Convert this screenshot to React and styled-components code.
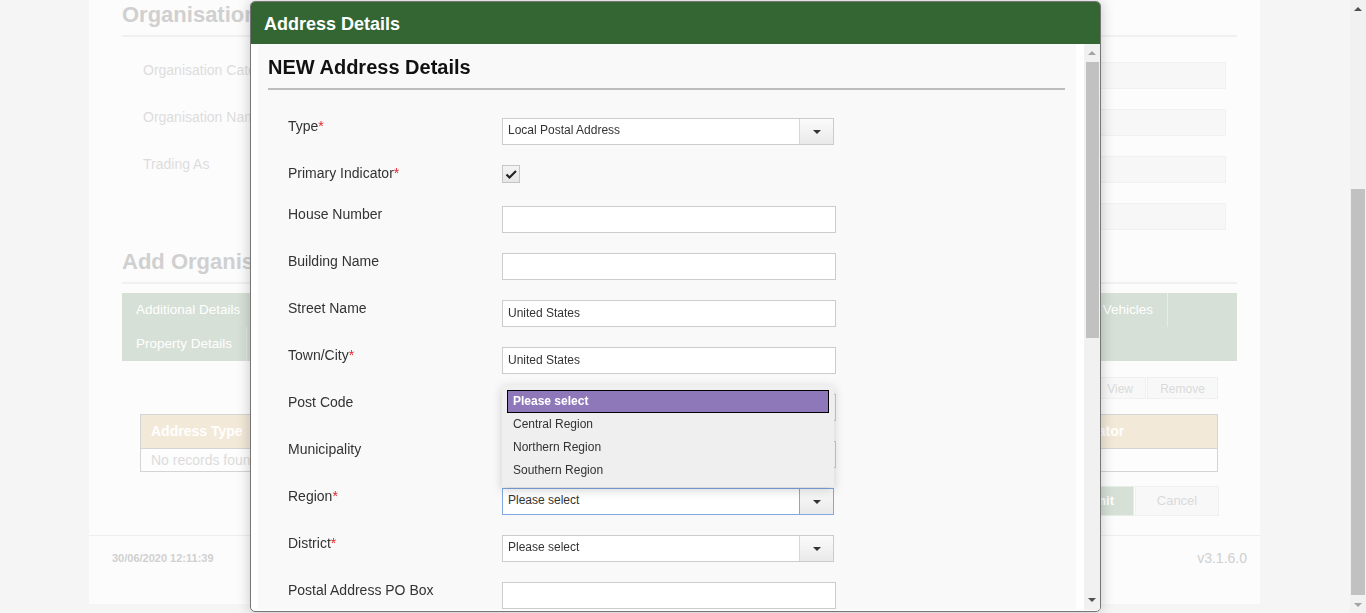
import React from 'react'
import styled, { createGlobalStyle } from 'styled-components'

const GlobalStyle = createGlobalStyle`
  html, body {
    margin: 0;
    padding: 0;
    overflow: hidden;
  }
  body {
    font-family: "Liberation Sans", Arial, sans-serif;
  }
`

const Screen = styled.div`
  display: flex;
  width: 1366px;
  height: 613px;
  background: #f5f5f5;
`

const Page = styled.div`
  flex: 1;
  height: 613px;
`

const Panel = styled.div`
  margin-left: 89px;
  width: 1171px;
  height: 604px;
  background: #fcfcfc;
  display: flex;
  flex-direction: column;
`

const Content = styled.div`
  padding: 0 23px 0 33px;
  flex: 1;
`

const SectionTitle = styled.div`
  margin-top: ${props => props.$top || 0}px;
  font-size: 22px;
  line-height: 24px;
  font-weight: bold;
  color: #d0d0d0;
  padding-bottom: 8px;
  border-bottom: 2px solid #f0f0f0;
  white-space: nowrap;
`

const FieldList = styled.div`
  margin-top: 25px;
  padding-left: 21px;
`

const FieldRow = styled.div`
  display: flex;
  height: 27px;
  margin-bottom: 20px;
`

const FieldLabel = styled.div`
  width: 360px;
  font-size: 14px;
  line-height: 16px;
  color: #dcdcdc;
`

const FieldInput = styled.div`
  flex: 1;
  margin-right: 11px;
  background: #f7f7f7;
  border: 1px solid #f1f1f1;
`

const TabBar = styled.div`
  margin-top: 9px;
  background: #d6e0d6;
`

const TabRow = styled.div`
  display: flex;
  padding-right: ${props => props.$padRight || 0}px;
`

const Tab = styled.div`
  flex: ${props => (props.$grow ? 1 : 'none')};
  width: ${props => (props.$width ? `${props.$width}px` : 'auto')};
  height: 34px;
  line-height: 34px;
  padding: 0 14px 0 14px;
  font-size: 13.5px;
  color: #fff;
  border-right: 1px solid #e7ece7;
  white-space: nowrap;
`

const ActionBar = styled.div`
  display: flex;
  justify-content: flex-end;
  gap: 1px;
  margin: 16px 19px 0 0;
`

const GhostButton = styled.div`
  height: 22px;
  line-height: 22px;
  padding: 0 ${props => props.$pad || 12}px;
  font-size: ${props => props.$size || 12}px;
  color: ${props => (props.$primary ? '#fff' : '#dadada')};
  font-weight: ${props => (props.$primary ? 'bold' : 'normal')};
  background: ${props => (props.$primary ? '#d6e0d6' : '#f8f8f8')};
  border: 1px solid ${props => (props.$primary ? '#e3f0e3' : '#f0f0f0')};
  text-align: center;
  min-width: ${props => props.$width || 0}px;
  box-sizing: border-box;
`

const Table = styled.div`
  margin: 15px 19px 0 18px;
  border: 1px solid #d4d4d4;
`

const TableHead = styled.div`
  display: grid;
  grid-template-columns: 1fr 1fr 1fr 218px;
  background: #f3e9d9;
  border-bottom: 1px solid #d4d4d4;
`

const HeadCell = styled.div`
  height: 33px;
  line-height: 33px;
  padding: 0 10px;
  font-size: 14px;
  font-weight: bold;
  color: #fff;
  white-space: nowrap;
`

const EmptyRow = styled.div`
  height: 22px;
  line-height: 22px;
  padding: 0 10px;
  font-size: 14px;
  color: #dcdcdc;
  background: #fdfdfd;
`

const FormButtons = styled.div`
  display: flex;
  justify-content: flex-end;
  gap: 1px;
  margin: 14px 18px 0 0;
  & > div {
    height: 30px;
    line-height: 28px;
  }
`

const Footer = styled.div`
  border-top: 1px solid #eeeeee;
  height: 69px;
  padding: 14px 13px 0 23px;
  box-sizing: border-box;
  display: flex;
  justify-content: space-between;
  align-items: flex-start;
`

const Stamp = styled.div`
  font-size: 11px;
  line-height: 16px;
  font-weight: bold;
  color: #d0d0d0;
`

const Version = styled.div`
  font-size: 14px;
  line-height: 16px;
  color: #cfcfcf;
`

const ScrollTrack = styled.div`
  width: 16px;
  height: ${props => props.$height}px;
  flex: none;
  background: #f1f1f1;
  display: flex;
  flex-direction: column;
  align-items: center;
`

const ArrowCell = styled.div`
  height: ${props => props.$h || 17}px;
  width: 16px;
  display: flex;
  align-items: center;
  justify-content: center;
  &::after {
    content: '';
    border-left: 4px solid transparent;
    border-right: 4px solid transparent;
    ${props => (props.$down ? 'border-top' : 'border-bottom')}: 4px solid ${props => props.$color};
  }
`

const Thumb = styled.div`
  width: ${props => props.$w || 13}px;
  height: ${props => props.$h}px;
  margin-top: ${props => props.$top}px;
  background: #c1c1c1;
`

const Spacer = styled.div`
  flex: 1;
`

/* modal */

const Modal = styled.div`
  position: fixed;
  left: 250px;
  top: 1px;
  width: 851px;
  height: 611px;
  box-sizing: border-box;
  border: 1px solid #767676;
  border-radius: 5px;
  background: #fff;
  box-shadow: 0 0 14px rgba(0, 0, 0, 0.22);
  display: flex;
  flex-direction: column;
  overflow: hidden;
`

const ModalHeader = styled.div`
  height: 42px;
  flex: none;
  background: #336633;
  display: flex;
  align-items: center;
  padding: 2px 0 0 13px;
  box-sizing: border-box;
  font-size: 18px;
  font-weight: bold;
  color: #fff;
`

const ModalBody = styled.div`
  flex: 1;
  display: flex;
  padding-left: 7px;
  gap: 8px;
  min-height: 0;
`

const ScrollArea = styled.div`
  flex: 1;
  background: #f9f9f9;
  padding: 11px 11px 0 10px;
  margin-bottom: 2px;
  overflow: hidden;
`

const FormTitle = styled.div`
  font-size: 20px;
  line-height: 24px;
  font-weight: bold;
  color: #111;
  padding-bottom: 9px;
  border-bottom: 2px solid #bdbdbd;
`

const FormRows = styled.div`
  margin-top: 28px;
  padding-left: 20px;
`

const FormRow = styled.div`
  display: flex;
  align-items: flex-start;
  margin-bottom: 20px;
`

const Label = styled.div`
  width: 214px;
  flex: none;
  font-size: 14px;
  line-height: 16px;
  color: #333;
`

const Req = styled.span`
  color: #e4262a;
`

const Control = styled.div`
  position: relative;
`

const TextInput = styled.div`
  width: 334px;
  height: 27px;
  box-sizing: border-box;
  border: 1px solid #cccccc;
  background: #fff;
  padding: 0 5px;
  font-size: 12px;
  line-height: 25px;
  color: #333;
`

const SelectBox = styled.div`
  width: 332px;
  height: 27px;
  box-sizing: border-box;
  border: 1px solid ${props => (props.$focused ? '#82a8e4' : '#cccccc')};
  background: #fff;
  display: flex;
`

const SelectValue = styled.div`
  flex: 1;
  padding: 0 5px;
  font-size: 12px;
  line-height: 23px;
  color: #333;
`

const SelectButton = styled.div`
  width: 33px;
  border-left: 1px solid ${props => (props.$focused ? '#82a8e4' : '#d6d6d6')};
  background: linear-gradient(#fbfbfb, #e9e9e9);
  display: flex;
  align-items: center;
  justify-content: center;
  &::after {
    content: '';
    border-left: 4px solid transparent;
    border-right: 4px solid transparent;
    border-top: 4px solid #333;
  }
`

const CheckWrap = styled.div`
  height: 21px;
`

const CheckBox = styled.div`
  width: 18px;
  height: 18px;
  box-sizing: border-box;
  border: 1px solid #c4c4c4;
  background: linear-gradient(#f4f4f4, #e6e6e6);
  display: flex;
  align-items: center;
  justify-content: center;
`

const DropList = styled.div`
  position: absolute;
  left: 0;
  bottom: calc(100% + 1px);
  width: 332px;
  box-sizing: border-box;
  padding: 5px;
  background: #efefef;
  box-shadow: 0 3px 10px rgba(0, 0, 0, 0.18);
  z-index: 5;
`

const DropItem = styled.div`
  height: 23px;
  box-sizing: border-box;
  padding-left: ${props => (props.$active ? 5 : 6)}px;
  font-size: 12px;
  line-height: ${props => (props.$active ? 21 : 23)}px;
  color: ${props => (props.$active ? '#fff' : '#333')};
  font-weight: ${props => (props.$active ? 'bold' : 'normal')};
  background: ${props => (props.$active ? '#8e78b9' : 'transparent')};
  border: ${props => (props.$active ? '1px solid #000' : 'none')};
`

const Select = ({ value, focused }) => (
  <SelectBox $focused={focused}>
    <SelectValue>{value}</SelectValue>
    <SelectButton $focused={focused} />
  </SelectBox>
)

const regions = ['Please select', 'Central Region', 'Northern Region', 'Southern Region']

const LabelText = ({ text, required }) => (
  <Label>
    {text}
    {required && <Req>*</Req>}
  </Label>
)

const App = () => {
  return (
    <>
      <GlobalStyle />
      <Screen>
        <Page>
          <Panel>
            <Content>
              <SectionTitle $top={3}>Organisation</SectionTitle>
              <FieldList>
                <FieldRow>
                  <FieldLabel>Organisation Category</FieldLabel>
                  <FieldInput />
                </FieldRow>
                <FieldRow>
                  <FieldLabel>Organisation Name</FieldLabel>
                  <FieldInput />
                </FieldRow>
                <FieldRow>
                  <FieldLabel>Trading As</FieldLabel>
                  <FieldInput />
                </FieldRow>
                <FieldRow>
                  <FieldLabel />
                  <FieldInput />
                </FieldRow>
              </FieldList>
              <SectionTitle>Add Organisation</SectionTitle>
              <TabBar>
                <TabRow $padRight={69}>
                  <Tab>Additional Details</Tab>
                  <Tab $grow />
                  <Tab>Vehicles</Tab>
                </TabRow>
                <TabRow>
                  <Tab>Property Details</Tab>
                  <Tab $width={60} />
                </TabRow>
              </TabBar>
              <ActionBar>
                <GhostButton $width={46} />
                <GhostButton $width={46}>View</GhostButton>
                <GhostButton $width={71}>Remove</GhostButton>
              </ActionBar>
              <Table>
                <TableHead>
                  <HeadCell>Address Type</HeadCell>
                  <HeadCell />
                  <HeadCell />
                  <HeadCell>Primary Indicator</HeadCell>
                </TableHead>
                <EmptyRow>No records found</EmptyRow>
              </Table>
              <FormButtons>
                <GhostButton $primary $size={13} $width={84}>Submit</GhostButton>
                <GhostButton $size={13} $width={84}>Cancel</GhostButton>
              </FormButtons>
            </Content>
            <Footer>
              <Stamp>30/06/2020 12:11:39</Stamp>
              <Version>v3.1.6.0</Version>
            </Footer>
          </Panel>
        </Page>
        <ScrollTrack $height={613}>
          <ArrowCell $color="#505050" />
          <Thumb $top={172} $h={406} $w={14} />
          <Spacer />
          <ArrowCell $down $color="#a3a3a3" />
        </ScrollTrack>
      </Screen>

      <Modal>
        <ModalHeader>Address Details</ModalHeader>
        <ModalBody>
          <ScrollArea>
            <FormTitle>NEW Address Details</FormTitle>
            <FormRows>
              <FormRow>
                <LabelText text="Type" required />
                <Select value="Local Postal Address" />
              </FormRow>
              <FormRow>
                <LabelText text="Primary Indicator" required />
                <CheckWrap>
                  <CheckBox>
                    <svg width="14" height="14" viewBox="0 0 14 14">
                      <path d="M2.5 7.5 L5.5 10.5 L12 4" fill="none" stroke="#222" strokeWidth="2.2" />
                    </svg>
                  </CheckBox>
                </CheckWrap>
              </FormRow>
              <FormRow>
                <LabelText text="House Number" />
                <TextInput />
              </FormRow>
              <FormRow>
                <LabelText text="Building Name" />
                <TextInput />
              </FormRow>
              <FormRow>
                <LabelText text="Street Name" />
                <TextInput>United States</TextInput>
              </FormRow>
              <FormRow>
                <LabelText text="Town/City" required />
                <TextInput>United States</TextInput>
              </FormRow>
              <FormRow>
                <LabelText text="Post Code" />
                <TextInput />
              </FormRow>
              <FormRow>
                <LabelText text="Municipality" />
                <TextInput />
              </FormRow>
              <FormRow>
                <LabelText text="Region" required />
                <Control>
                  <Select value="Please select" focused />
                  <DropList>
                    {regions.map((r, i) => (
                      <DropItem key={r} $active={i === 0}>{r}</DropItem>
                    ))}
                  </DropList>
                </Control>
              </FormRow>
              <FormRow>
                <LabelText text="District" required />
                <Select value="Please select" />
              </FormRow>
              <FormRow>
                <LabelText text="Postal Address PO Box" />
                <TextInput />
              </FormRow>
            </FormRows>
          </ScrollArea>
          <ScrollTrack $height={566}>
            <ArrowCell $color="#a3a3a3" />
            <Thumb $top={1} $h={276} />
            <Spacer />
            <ArrowCell $down $color="#505050" $h={20} />
          </ScrollTrack>
        </ModalBody>
      </Modal>
    </>
  )
}

export default App
